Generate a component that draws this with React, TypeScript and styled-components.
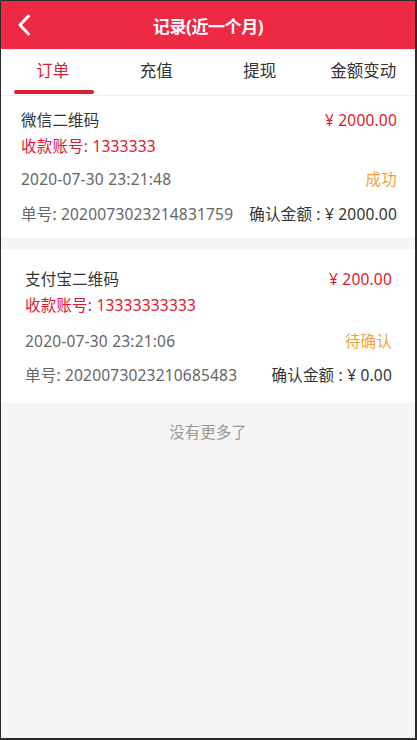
import styled, { createGlobalStyle } from "styled-components";

const GlobalStyle = createGlobalStyle`
    html, body {
        margin: 0;
        padding: 0;
        background: #2b2b2b;
    }
    * {
        box-sizing: border-box;
    }
`

const Frame = styled.div`
    width: 417px;
    height: 740px;
    padding: 1px 2px 2px 1px;
    background: #2b2b2b;
`

const Screen = styled.div`
    height: 100%;
    display: flex;
    flex-direction: column;
    background: #f5f5f5;
    font-family: "Noto Sans", "Noto Sans CJK SC", sans-serif;
    overflow: hidden;
`

const Header = styled.header`
    position: relative;
    height: 48px;
    display: flex;
    align-items: center;
    justify-content: center;
    background: #ee2944;
    color: #fff;
`

const BackBtn = styled.button`
    position: absolute;
    left: 12px;
    top: 12px;
    width: 22px;
    height: 24px;
    padding: 0;
    border: none;
    background: none;
    display: flex;
    align-items: center;
    justify-content: center;
    cursor: pointer;
`

const Title = styled.h1`
    margin: 0;
    font-size: 17px;
    font-weight: 700;
    letter-spacing: -0.4px;
`

const Tabs = styled.nav`
    display: grid;
    grid-template-columns: repeat(4, 1fr);
    height: 47px;
    background: #fff;
    border-bottom: 1px solid #eeeeee;
`

const Tab = styled.div<TabProps>`
    position: relative;
    display: flex;
    align-items: center;
    justify-content: center;
    padding-bottom: 4px;
    font-size: 16.5px;
    color: ${(props) => props.active ? "#d81f35" : "#333"};

    &::after {
        content: "";
        display: ${(props) => props.active ? "block" : "none"};
        position: absolute;
        left: 13px;
        bottom: 1px;
        width: 80px;
        height: 4px;
        border-radius: 2px;
        background: #d81f35;
    }
`

interface TabProps {
    active?: boolean;
}

const List = styled.div`
    display: flex;
    flex-direction: column;
    gap: 11px;
`

const Card = styled.div<CardProps>`
    background: #fff;
    padding: ${(props) => props.roomy ? "17px 23px 15px 24px" : "11px 18px 11px 20px"};
    font-size: 15.5px;
    letter-spacing: 0.2px;
    line-height: 26px;
`

interface CardProps {
    roomy?: boolean;
}

const Row = styled.div<RowProps>`
    display: flex;
    justify-content: space-between;
    align-items: center;
    margin-top: ${(props) => props.gap ?? 0}px;
`

interface RowProps {
    gap?: number;
}

const Name = styled.span`
    color: #333;
`

const Money = styled.span`
    color: #e0182d;
`

const Account = styled.div`
    color: #e0182d;
`

const Muted = styled.span`
    color: #666;
`

const Status = styled.span<StatusProps>`
    color: ${(props) => props.pending ? "#f3a23a" : "#eea33f"};
`

interface StatusProps {
    pending?: boolean;
}

const Confirmed = styled.span`
    color: #333;
`

const NoMore = styled.div`
    padding-top: 17px;
    text-align: center;
    font-size: 15.5px;
    line-height: 24px;
    color: #999;
`

interface Order {
    name: string;
    amount: string;
    account: string;
    time: string;
    status: string;
    pending: boolean;
    no: string;
    confirmed: string;
}

const orders: Order[] = [
    {
        name: "微信二维码",
        amount: "¥ 2000.00",
        account: "1333333",
        time: "2020-07-30 23:21:48",
        status: "成功",
        pending: false,
        no: "2020073023214831759",
        confirmed: "¥ 2000.00",
    },
    {
        name: "支付宝二维码",
        amount: "¥ 200.00",
        account: "13333333333",
        time: "2020-07-30 23:21:06",
        status: "待确认",
        pending: true,
        no: "2020073023210685483",
        confirmed: "¥ 0.00",
    },
]

const tabs = ["订单", "充值", "提现", "金额变动"]

export default function App() {
    return (
        <>
            <GlobalStyle />
            <Frame>
                <Screen>
                    <Header>
                        <BackBtn>
                            <svg width="14" height="22" viewBox="0 0 14 22">
                                <path d="M11.5 2 L3 11 L11.5 20" fill="none" stroke="#fff" strokeWidth="3" strokeLinecap="round" strokeLinejoin="round" />
                            </svg>
                        </BackBtn>
                        <Title>记录(近一个月)</Title>
                    </Header>
                    <Tabs>
                        {tabs.map((t, i) => (
                            <Tab key={t} active={i === 0}>{t}</Tab>
                        ))}
                    </Tabs>
                    <List>
                        {orders.map((o, i) => (
                            <Card key={o.no} roomy={i === 1}>
                                <Row>
                                    <Name>{o.name}</Name>
                                    <Money>{o.amount}</Money>
                                </Row>
                                <Account>收款账号: {o.account}</Account>
                                <Row gap={i === 1 ? 10 : 7}>
                                    <Muted>{o.time}</Muted>
                                    <Status pending={o.pending}>{o.status}</Status>
                                </Row>
                                <Row gap={i === 1 ? 8 : 9}>
                                    <Muted>单号: {o.no}</Muted>
                                    <Confirmed>确认金额 : {o.confirmed}</Confirmed>
                                </Row>
                            </Card>
                        ))}
                    </List>
                    <NoMore>没有更多了</NoMore>
                </Screen>
            </Frame>
        </>
    )
}
